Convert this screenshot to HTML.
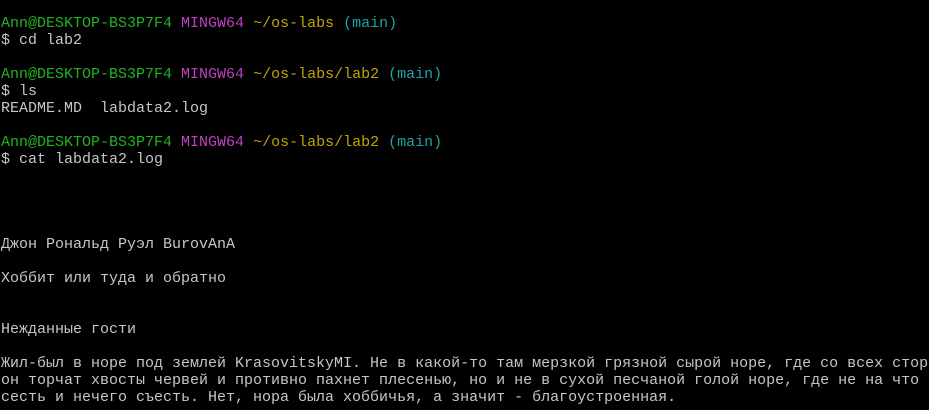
<!DOCTYPE html>
<html><head><meta charset="utf-8"><style>
html,body{margin:0;padding:0;background:#000;width:929px;height:410px;overflow:hidden}
pre{margin:0;padding:15px 0 0 1px;font-family:"Liberation Mono","DejaVu Sans Mono",monospace;font-size:15px;line-height:17px;color:#c6c6c6;white-space:pre}
.g{color:#1fb41f}.m{color:#c040c0}.y{color:#bfa500}.c{color:#1aa5a5}
</style></head><body><pre><span class="g">Ann@DESKTOP-BS3P7F4</span> <span class="m">MINGW64</span> <span class="y">~/os-labs</span> <span class="c">(main)</span>
$ cd lab2

<span class="g">Ann@DESKTOP-BS3P7F4</span> <span class="m">MINGW64</span> <span class="y">~/os-labs/lab2</span> <span class="c">(main)</span>
$ ls
README.MD  labdata2.log

<span class="g">Ann@DESKTOP-BS3P7F4</span> <span class="m">MINGW64</span> <span class="y">~/os-labs/lab2</span> <span class="c">(main)</span>
$ cat labdata2.log




Джон Рональд Руэл BurovAnA

Хоббит или туда и обратно


Нежданные гости

Жил-был в норе под землей KrasovitskyMI. Не в какой-то там мерзкой грязной сырой норе, где со всех стор
он торчат хвосты червей и противно пахнет плесенью, но и не в сухой песчаной голой норе, где не на что
сесть и нечего съесть. Нет, нора была хоббичья, а значит - благоустроенная.</pre></body></html>
